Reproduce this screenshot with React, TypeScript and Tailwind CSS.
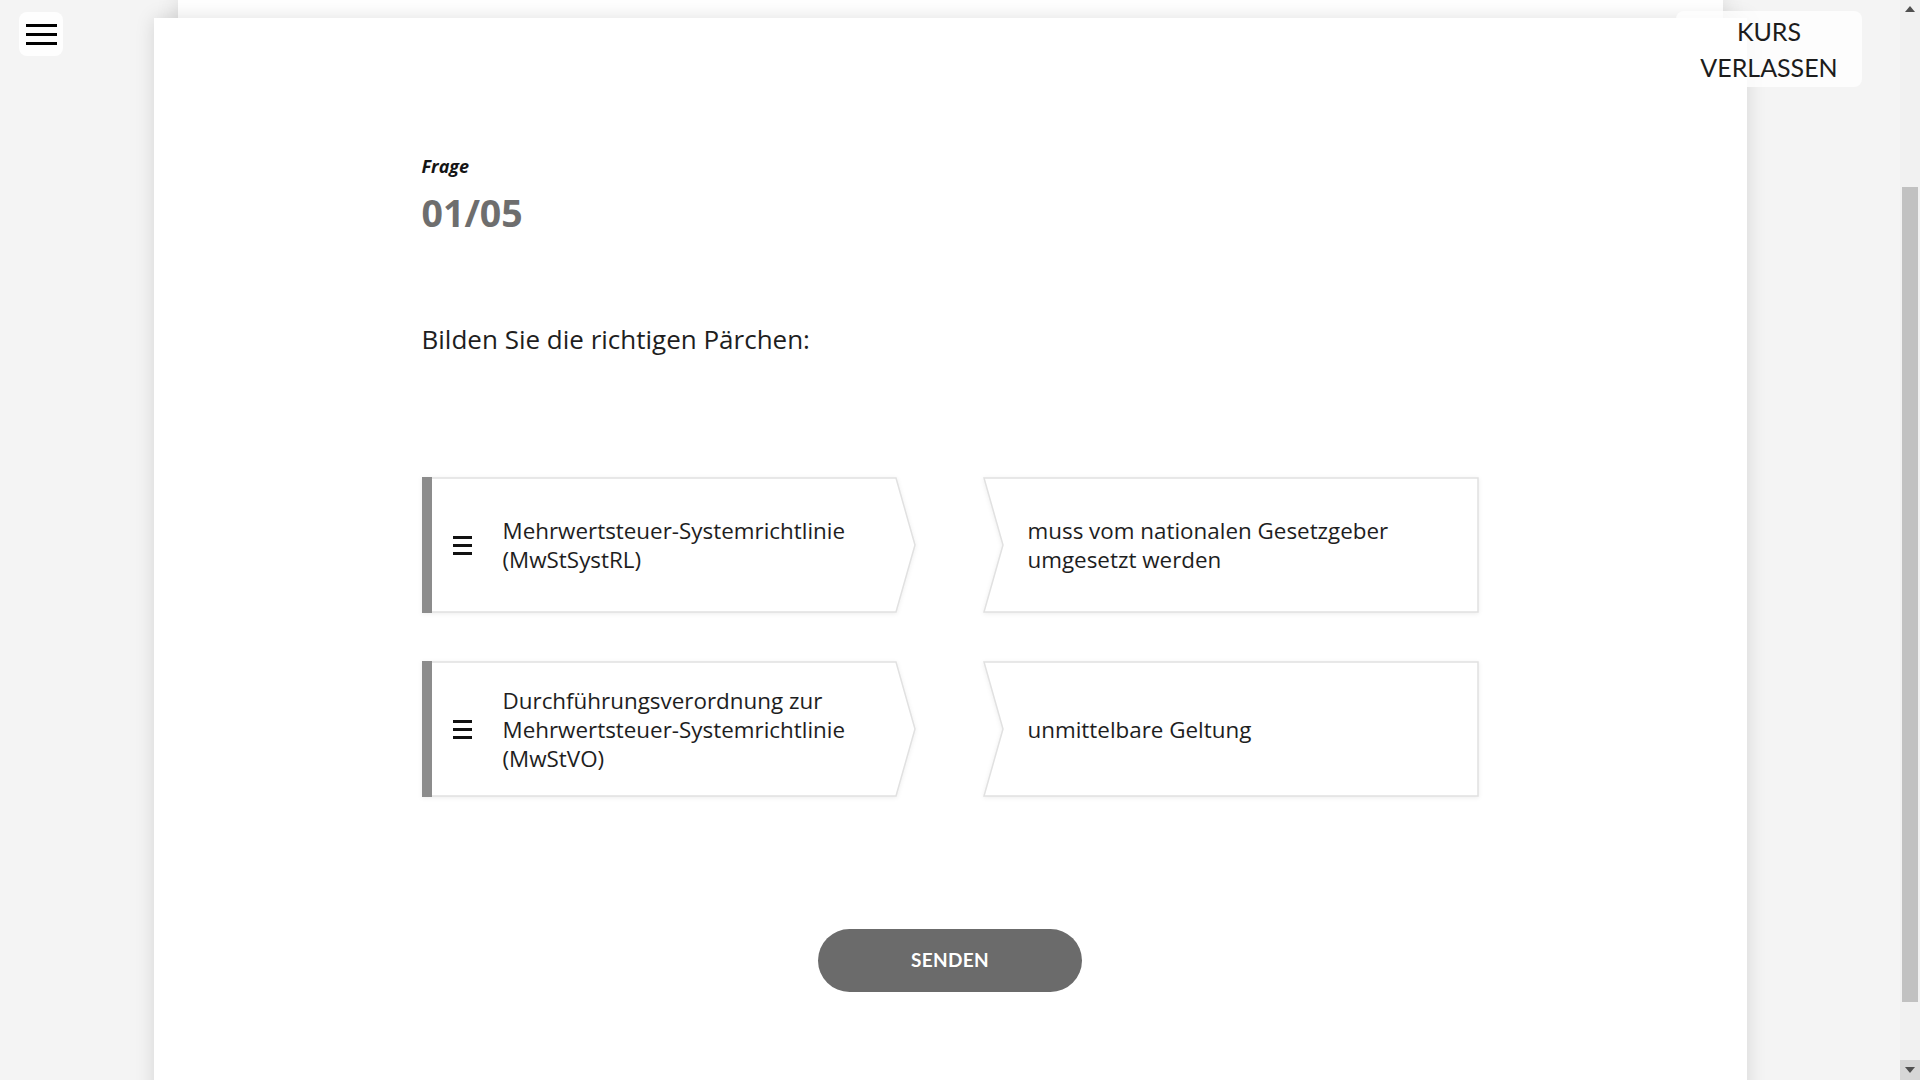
import React from 'react';

const body = { fontFamily: '"Open Sans", "Liberation Sans", sans-serif' };
const lato = { fontFamily: 'Lato, "Liberation Sans", sans-serif' };

type Pair = { term: string[]; match: string[] };

const pairs: Pair[] = [
  {
    term: ['Mehrwertsteuer-Systemrichtlinie', '(MwStSystRL)'],
    match: ['muss vom nationalen Gesetzgeber', 'umgesetzt werden'],
  },
  {
    term: ['Durchführungsverordnung zur', 'Mehrwertsteuer-Systemrichtlinie', '(MwStVO)'],
    match: ['unmittelbare Geltung'],
  },
];

const TermCard: React.FC<{ lines: string[] }> = ({ lines }) => (
  <div className="relative flex h-[136px] w-[494px] items-center">
    {/* card outline with the arrow tip */}
    <svg
      className="absolute inset-0 h-full w-full"
      viewBox="0 0 494 136"
      preserveAspectRatio="none"
      style={{ filter: 'drop-shadow(0 1px 2px rgba(0,0,0,0.07))' }}
    >
      <polygon points="1,1 474,1 493,68 474,135 1,135" fill="#fff" stroke="#e1e1e1" strokeWidth="1.5" />
      <rect x="0" y="0" width="10" height="136" fill="#8c8c8c" />
    </svg>
    <div className="relative flex w-[31px] shrink-0" />
    <div className="relative flex w-[19px] shrink-0 flex-col gap-[5px]">
      <span className="h-[3px] w-full bg-[#111]" />
      <span className="h-[3px] w-full bg-[#111]" />
      <span className="h-[3px] w-full bg-[#111]" />
    </div>
    <div className="relative ml-[31px] pr-[30px] text-[22.4px] leading-[29px] text-[#1e1e1e]">
      {lines.map((l) => (
        <div key={l}>{l}</div>
      ))}
    </div>
  </div>
);

const MatchCard: React.FC<{ lines: string[] }> = ({ lines }) => (
  <div className="relative flex h-[136px] w-[496px] items-center">
    <svg
      className="absolute inset-0 h-full w-full"
      viewBox="0 0 496 136"
      preserveAspectRatio="none"
      style={{ filter: 'drop-shadow(0 1px 2px rgba(0,0,0,0.07))' }}
    >
      <polygon points="1,1 495,1 495,135 1,135 20,68" fill="#fff" stroke="#e1e1e1" strokeWidth="1.5" />
    </svg>
    <div className="relative pl-[45px] pr-[36px] text-[22.4px] leading-[29px] text-[#1e1e1e]">
      {lines.map((l) => (
        <div key={l}>{l}</div>
      ))}
    </div>
  </div>
);

const Scrollbar: React.FC = () => (
  <div className="flex h-full w-[20px] shrink-0 flex-col bg-[#f1f1f1]">
    <div className="flex h-[17px] items-center justify-center">
      <svg width="10" height="6" viewBox="0 0 10 6">
        <polygon points="0,6 10,6 5,0" fill="#505050" />
      </svg>
    </div>
    <div className="h-[170px]" />
    <div className="mx-[2px] h-[815px] bg-[#c1c1c1]" />
    <div className="flex-1" />
    <div className="flex h-[20px] items-center justify-center bg-[#d6d6d6]">
      <svg width="10" height="6" viewBox="0 0 10 6">
        <polygon points="0,0 10,0 5,6" fill="#505050" />
      </svg>
    </div>
  </div>
);

export default function App() {
  return (
    <div className="flex h-screen w-full overflow-hidden bg-[#f4f4f4]" style={body}>
      <div className="relative flex-1 overflow-hidden">
        <div className="relative mx-auto w-[1593px]">
          {/* stacked sheet behind the page */}
          <div className="absolute left-[24px] right-[24px] top-[-20px] h-[904px] bg-white shadow-[0_0_22px_rgba(0,0,0,0.12)]" />

          <div className="relative mt-[18px] min-h-[1100px] bg-white shadow-[0_0_18px_rgba(0,0,0,0.13)]">
            <div className="mx-auto flex w-[1057px] flex-col pt-[136px]">
              <div className="text-[18px] font-bold italic leading-[24px] text-[#151515]">Frage</div>
              <div className="mt-[12px] text-[37.5px] font-bold leading-[45px] text-[#6e6e6e]">01/05</div>
              <div className="mt-[86px] text-[26px] leading-[36px] text-[#1e1e1e]">
                Bilden Sie die richtigen Pärchen:
              </div>

              <div className="mt-[120px] flex flex-col gap-[48px]">
                {pairs.map((p) => (
                  <div key={p.term.join(' ')} className="flex items-center justify-between">
                    <TermCard lines={p.term} />
                    <MatchCard lines={p.match} />
                  </div>
                ))}
              </div>

              <div className="mt-[132px] flex justify-center">
                <button
                  className="flex h-[63px] w-[264px] items-center justify-center rounded-full bg-[#6b6b6b] text-[19px] font-bold tracking-[0.3px] text-white"
                  style={lato}
                >
                  SENDEN
                </button>
              </div>
            </div>
          </div>
        </div>

        {/* menu toggle */}
        <button className="absolute left-[19px] top-[12px] flex h-[44px] w-[44px] flex-col items-center justify-center gap-[6px] rounded-[8px] bg-white/90">
          <span className="h-[3px] w-[31px] bg-black" />
          <span className="h-[3px] w-[31px] bg-black" />
          <span className="h-[3px] w-[31px] bg-black" />
        </button>

        {/* leave course */}
        <button
          className="absolute right-[38px] top-[11px] flex h-[76px] w-[186px] flex-col items-center justify-center rounded-[8px] bg-white/80 text-[25px] leading-[36px] text-[#1c1c1c]"
          style={lato}
        >
          <span>KURS</span>
          <span>VERLASSEN</span>
        </button>
      </div>
      <Scrollbar />
    </div>
  );
}
